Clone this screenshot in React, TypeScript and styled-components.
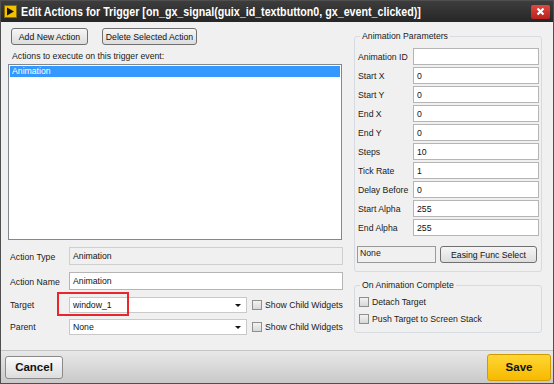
import styled, { createGlobalStyle } from 'styled-components';

const GlobalStyle = createGlobalStyle`
  html, body {
    margin: 0;
    padding: 0;
    background: #ffffff;
  }
  body {
    font-family: 'Liberation Sans', Arial, sans-serif;
    font-size: 8.7px;
    color: #1a1a1a;
  }
  * {
    box-sizing: border-box;
  }
`;

const Window = styled.div`
  width: 554px;
  height: 384px;
  display: flex;
  flex-direction: column;
  background: #f0f0f0;
  border: 1px solid #4f4f4f;
  overflow: hidden;
`;

const TitleBar = styled.div`
  height: 21px;
  flex-shrink: 0;
  display: flex;
  align-items: center;
  padding: 0 3px 0 3px;
  background: linear-gradient(#3d3d3d, #262626);
  color: #ffffff;
  font-size: 10.7px;
  font-weight: bold;
  gap: 4px;

  .title {
    flex: 1;
    white-space: nowrap;
    transform: scaleY(1.12);
  }
`;

const CloseButton = styled.div`
  width: 19px;
  height: 14px;
  border-radius: 2px;
  background: linear-gradient(#e0473f, #b8231d);
  display: flex;
  align-items: center;
  justify-content: center;
`;

const Body = styled.div`
  flex: 1;
  display: flex;
  gap: 12px;
  padding: 6px 11px 0 7px;
`;

const LeftColumn = styled.div`
  width: 334px;
  display: flex;
  flex-direction: column;
`;

const RightColumn = styled.div`
  width: 188px;
  display: flex;
  flex-direction: column;
`;

const ButtonRow = styled.div`
  display: flex;
  gap: 14px;
  padding-left: 3px;
`;

const PushButton = styled.div<{ width: number }>`
  width: ${({ width }) => width}px;
  height: 17px;
  display: flex;
  align-items: center;
  justify-content: center;
  border: 1px solid #707070;
  border-radius: 3px;
  background: linear-gradient(#f5f5f5, #dddddd);
  color: #111;
  white-space: nowrap;
`;

const Caption = styled.div`
  margin-top: 6px;
  padding-left: 4px;
  line-height: 10px;
`;

const ListBox = styled.div`
  margin-top: 3px;
  height: 176px;
  background: #ffffff;
  border: 1px solid #828790;
  padding: 1px;
`;

const ListItem = styled.div<{ selected?: boolean }>`
  height: 11px;
  line-height: 11px;
  padding-left: 2px;
  background: ${({ selected }) => (selected ? '#3399ff' : 'transparent')};
  color: ${({ selected }) => (selected ? '#ffffff' : '#111')};
`;

const Form = styled.div`
  margin-top: 7px;
  display: grid;
  grid-template-columns: 61px 1fr;
  grid-template-rows: 25px 25px 22px 18px;
  align-items: start;
`;

const FieldLabel = styled.div<{ offset: number }>`
  padding-left: 2px;
  margin-top: ${({ offset }) => offset}px;
`;

const TextBox = styled.div<{ disabled?: boolean; h?: number }>`
  height: ${({ h }) => h ?? 18}px;
  display: flex;
  align-items: center;
  padding-left: 3px;
  background: ${({ disabled }) => (disabled ? '#f0f0f0' : '#ffffff')};
  border: 1px solid ${({ disabled }) => (disabled ? '#cfcfcf' : '#b5b5b5')};
  color: #111;
`;

const ComboRow = styled.div`
  display: flex;
  align-items: center;
  gap: 5px;
`;

const ComboWrap = styled.div`
  position: relative;
  width: 178px;
`;

const Combo = styled.div`
  height: 16px;
  display: flex;
  align-items: center;
  justify-content: space-between;
  padding: 0 5px 0 3px;
  background: #ffffff;
  border: 1px solid #c9c9c9;
  color: #111;
`;

const Arrow = styled.span`
  width: 0;
  height: 0;
  border-left: 3px solid transparent;
  border-right: 3px solid transparent;
  border-top: 3px solid #111;
`;

const Highlight = styled.div`
  position: absolute;
  left: -12px;
  top: -5px;
  width: 72px;
  height: 24px;
  border: 2px solid #e8262b;
  pointer-events: none;
`;

const CheckLine = styled.label`
  display: flex;
  align-items: center;
  gap: 3px;
  white-space: nowrap;
`;

const CheckBox = styled.span`
  width: 10px;
  height: 10px;
  border: 1px solid #8e8f8f;
  background: linear-gradient(#f2f2f2, #d8d8d8);
  flex-shrink: 0;
`;

const Group = styled.fieldset<{ top: number }>`
  margin: ${({ top }) => top}px 0 0;
  padding: 7px 2px 8px 2px;
  border: 1px solid #d5dbe0;
  border-radius: 3px;
  min-width: 0;

  legend {
    padding: 0 2px;
    margin-left: 3px;
    line-height: 10px;
  }
`;

const ParamRow = styled.div`
  display: grid;
  grid-template-columns: 56px 126px;
  align-items: center;
  height: 19px;
  padding-bottom: 2px;
`;

const ParamLabel = styled.div`
  padding-left: 1px;
  white-space: nowrap;
`;

const EasingRow = styled.div`
  margin-top: 8px;
  display: flex;
  gap: 4px;
`;

const NoneBox = styled.div`
  width: 79px;
  height: 17px;
  padding: 1px 2px;
  background: #f0f0f0;
  border: 1px solid #9a9a9a;
  line-height: 10px;
`;

const CompleteList = styled.div`
  display: flex;
  flex-direction: column;
  gap: 7px;
  padding-left: 2px;
`;

const Footer = styled.div`
  height: 33px;
  flex-shrink: 0;
  display: flex;
  align-items: center;
  justify-content: space-between;
  padding: 0 2px 0 4px;
  border-top: 1px solid #c4c4c4;
  background: linear-gradient(#e8e8e8, #c9c9c9);
`;

const FooterButton = styled.div<{ primary?: boolean }>`
  width: ${({ primary }) => (primary ? 64 : 58)}px;
  height: ${({ primary }) => (primary ? 27 : 23)}px;
  display: flex;
  align-items: center;
  justify-content: center;
  font-size: 11.5px;
  font-weight: bold;
  color: #111;
  border-radius: 3px;
  border: 1px solid ${({ primary }) => (primary ? '#d09b00' : '#8a8a8a')};
  background: ${({ primary }) =>
    primary ? 'linear-gradient(#ffd634, #f7b900)' : 'linear-gradient(#fbfbfb, #dcdcdc)'};
`;

const params = [
  ['Animation ID', ''],
  ['Start X', '0'],
  ['Start Y', '0'],
  ['End X', '0'],
  ['End Y', '0'],
  ['Steps', '10'],
  ['Tick Rate', '1'],
  ['Delay Before', '0'],
  ['Start Alpha', '255'],
  ['End Alpha', '255'],
];

const AppIcon = () => (
  <svg width="13" height="13" viewBox="0 0 13 13">
    <rect x="0.5" y="0.5" width="12" height="12" fill="#f2c200" stroke="#8a6d00" />
    <path d="M3 2.5 L10 6.5 L3 10.5 Z" fill="#111" />
  </svg>
);

const CloseIcon = () => (
  <svg width="9" height="9" viewBox="0 0 9 9">
    <path d="M1.5 1.5 L7.5 7.5 M7.5 1.5 L1.5 7.5" stroke="#fff" strokeWidth="2.2" />
  </svg>
);

const App = () => {
  return (
    <>
      <GlobalStyle />
      <Window>
        <TitleBar>
          <AppIcon />
          <span className="title">
            Edit Actions for Trigger [on_gx_signal(guix_id_textbutton0, gx_event_clicked)]
          </span>
          <CloseButton>
            <CloseIcon />
          </CloseButton>
        </TitleBar>

        <Body>
          <LeftColumn>
            <ButtonRow>
              <PushButton width={77}>Add New Action</PushButton>
              <PushButton width={95}>Delete Selected Action</PushButton>
            </ButtonRow>
            <Caption>Actions to execute on this trigger event:</Caption>
            <ListBox>
              <ListItem selected>Animation</ListItem>
            </ListBox>

            <Form>
              <FieldLabel offset={5}>Action Type</FieldLabel>
              <TextBox disabled>Animation</TextBox>

              <FieldLabel offset={5}>Action Name</FieldLabel>
              <TextBox>Animation</TextBox>

              <FieldLabel offset={3}>Target</FieldLabel>
              <ComboRow>
                <ComboWrap>
                  <Combo>
                    window_1
                    <Arrow />
                  </Combo>
                  <Highlight />
                </ComboWrap>
                <CheckLine>
                  <CheckBox />
                  Show Child Widgets
                </CheckLine>
              </ComboRow>

              <FieldLabel offset={3}>Parent</FieldLabel>
              <ComboRow>
                <ComboWrap>
                  <Combo>
                    None
                    <Arrow />
                  </Combo>
                </ComboWrap>
                <CheckLine>
                  <CheckBox />
                  Show Child Widgets
                </CheckLine>
              </ComboRow>
            </Form>
          </LeftColumn>

          <RightColumn>
            <Group top={3}>
              <legend>Animation Parameters</legend>
              {params.map(([label, value]) => (
                <ParamRow key={label}>
                  <ParamLabel>{label}</ParamLabel>
                  <TextBox h={17}>{value}</TextBox>
                </ParamRow>
              ))}
              <EasingRow>
                <NoneBox>None</NoneBox>
                <PushButton width={97}>Easing Func Select</PushButton>
              </EasingRow>
            </Group>

            <Group top={8}>
              <legend>On Animation Complete</legend>
              <CompleteList>
                <CheckLine>
                  <CheckBox />
                  Detach Target
                </CheckLine>
                <CheckLine>
                  <CheckBox />
                  Push Target to Screen Stack
                </CheckLine>
              </CompleteList>
            </Group>
          </RightColumn>
        </Body>

        <Footer>
          <FooterButton>Cancel</FooterButton>
          <FooterButton primary>Save</FooterButton>
        </Footer>
      </Window>
    </>
  );
};

export default App;
